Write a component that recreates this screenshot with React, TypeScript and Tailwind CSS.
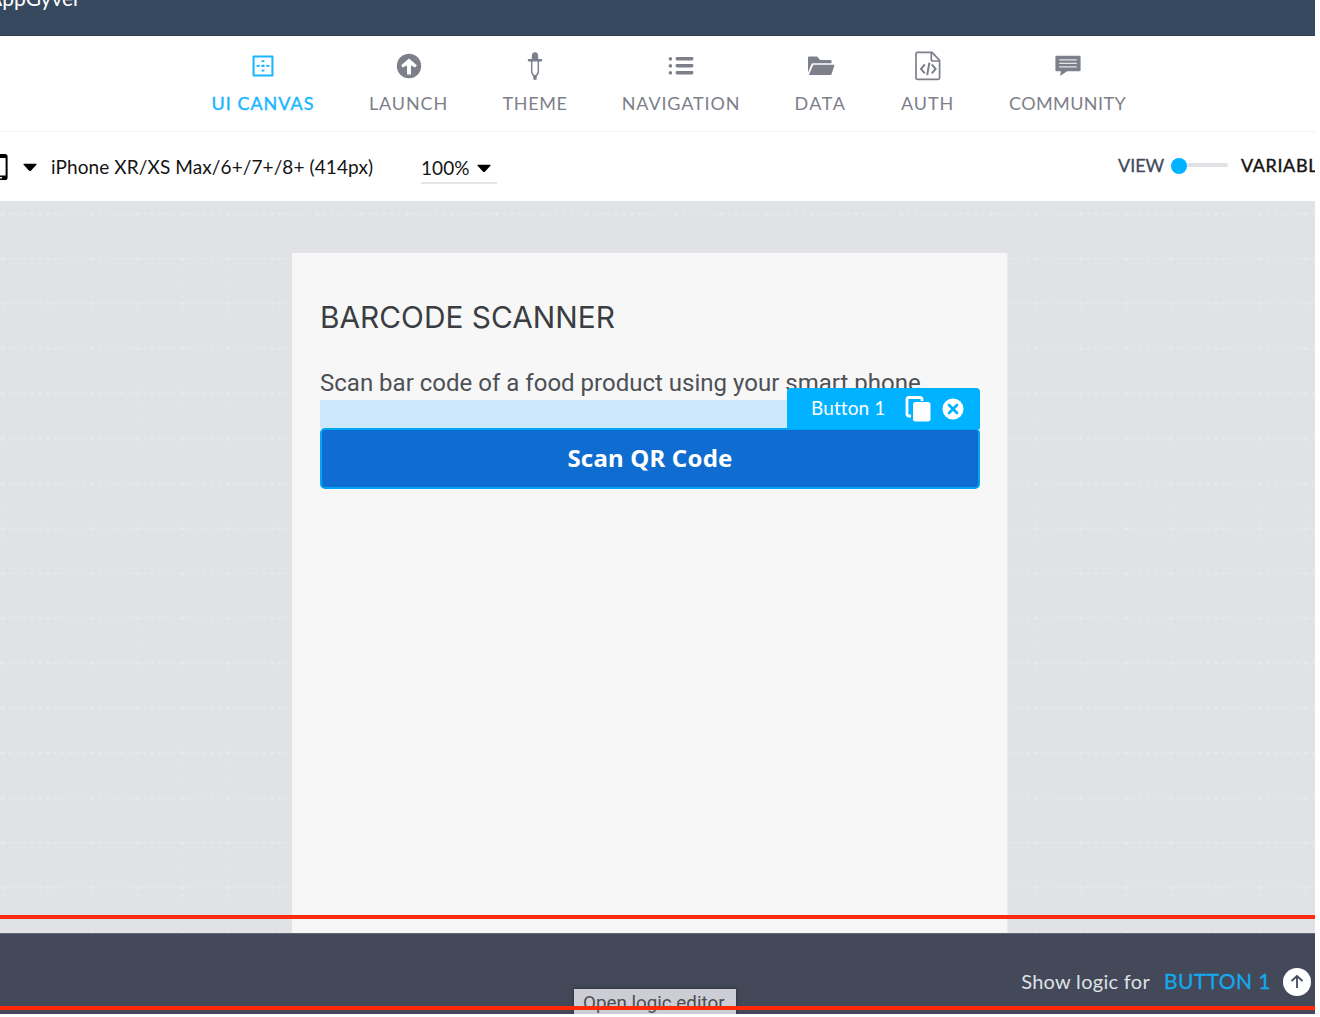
import type { ReactNode } from "react";

type NavItem = { label: string; style: string; icon: ReactNode };

const CanvasIcon = () => (
  <svg width="22" height="22" viewBox="0 0 22 22" fill="currentColor">
    <path fillRule="evenodd" d="M1.5 0.5h19a1 1 0 0 1 1 1v19a1 1 0 0 1-1 1h-19a1 1 0 0 1-1-1v-19a1 1 0 0 1 1-1zM2.600 2.600v16.800h16.800V2.600z" />
    <rect x="9.6" y="5.2" width="2.8" height="1.9" />
    <rect x="9.6" y="14.6" width="2.8" height="1.9" />
    <rect x="4.6" y="9.9" width="3.2" height="1.9" />
    <rect x="9.4" y="9.7" width="3.2" height="2.3" />
    <rect x="14.2" y="9.9" width="3.2" height="1.9" />
  </svg>
);

const LaunchIcon = () => (
  <svg width="26" height="26" viewBox="0 0 26 26">
    <circle cx="13" cy="13" r="12.2" fill="currentColor" />
    <path d="M13 5.600 5.200 12.200 6.600 14.400 11 12.400v9h4v-9l4.400 2 1.400-2.200z" fill="white" />
  </svg>
);

const ThemeIcon = () => (
  <svg width="16" height="30" viewBox="0 0 16 30" fill="none">
    <path d="M4.8 8V5a3.2 3.8 0 0 1 6.4 0v3h3a1 1 0 0 1 1 1v.6a1 1 0 0 1-1 1H1.8a1 1 0 0 1-1-1V9a1 1 0 0 1 1-1z" fill="currentColor" />
    <path d="M4.7 10v11.5L7.2 25.5v2.4h1.6v-2.4l2.5-4V10" stroke="currentColor" strokeWidth="1.5" />
    <path d="M6 24h4l-1.2 4.4H7.2z" fill="currentColor" />
  </svg>
);

const NavigationIcon = () => (
  <svg width="26" height="20" viewBox="0 0 26 20" fill="currentColor">
    <rect x="0.8" y="1.2" width="3.200" height="3.200" rx="1" />
    <rect x="0.8" y="8.2" width="3.200" height="3.200" rx="1" />
    <rect x="0.8" y="15.2" width="3.200" height="3.200" rx="1" />
    <rect x="7.6" y="1" width="17.8" height="3.5" rx="1.4" />
    <rect x="7.6" y="8" width="17.8" height="3.5" rx="1.4" />
    <rect x="7.6" y="15" width="17.8" height="3.5" rx="1.4" />
  </svg>
);

const DataIcon = () => (
  <svg width="28" height="20" viewBox="0 0 28 20" fill="currentColor">
    <path d="M1 16.5V1.6A1 1 0 0 1 2 .6h7.8a1 1 0 0 1 .8.4l2.4 2.9h10.6a.9.9 0 0 1 .9.9v2.4H6a1.8 1.8 0 0 0-1.7 1.2z" />
    <path d="M6.3 8.7h20.1a.9.9 0 0 1 .85 1.2l-2.7 8.4a1.2 1.2 0 0 1-1.1.8H1.8z" />
  </svg>
);

const AuthIcon = () => (
  <svg width="26" height="30" viewBox="0 0 26 30" fill="none" stroke="currentColor" strokeWidth="1.7">
    <path d="M2.4 1.4h14.6l7.6 8v17.4a1.6 1.6 0 0 1-1.6 1.6H2.4A1.4 1.4 0 0 1 1 27V2.8a1.4 1.4 0 0 1 1.4-1.4z" />
    <path d="M16.3 1.6v6.6a1.8 1.8 0 0 0 1.8 1.8h6.3" />
    <path d="M9.8 13.3 6 18l3.8 4.3M16.8 13.3l3.8 4.7-3.8 4.3M14.4 11.6l-2.2 12.6" strokeWidth="2" />
  </svg>
);

const CommunityIcon = () => (
  <svg width="26" height="22" viewBox="0 0 26 22">
    <path d="M1.6.8h22.8a1.2 1.2 0 0 1 1.2 1.2v13a1.2 1.2 0 0 1-1.2 1.2H12.2L5 21l1-4.8H1.6A1.2 1.2 0 0 1 .4 15V2A1.2 1.2 0 0 1 1.6.8z" fill="currentColor" />
    <path d="M4.2 4.9h17.6M4.2 8.4h17.6M4.2 11.9h17.6" stroke="#e4e5e7" strokeWidth="1.4" />
  </svg>
);

const navItems: NavItem[] = [
  { label: "UI CANVAS", style: "w-[102px] text-[#1ab6ff] tracking-[1px] [-webkit-text-stroke:0.4px_#1ab6ff]", icon: <CanvasIcon /> },
  { label: "LAUNCH", style: "w-[78px] tracking-[0.85px]", icon: <LaunchIcon /> },
  { label: "THEME", style: "w-[64px] tracking-[0.6px]", icon: <ThemeIcon /> },
  { label: "NAVIGATION", style: "w-[117px] tracking-[0.85px]", icon: <NavigationIcon /> },
  { label: "DATA", style: "w-[51px] tracking-[1.6px]", icon: <DataIcon /> },
  { label: "AUTH", style: "w-[52px] tracking-[0.9px]", icon: <AuthIcon /> },
  { label: "COMMUNITY", style: "w-[117px] tracking-[0.4px]", icon: <CommunityIcon /> },
];

const Caret = () => (
  <svg width="14" height="9" viewBox="0 0 14 9" className="shrink-0">
    <path d="M.9.8h12.2q.9.2.3 1L7.9 7.7q-.9.8-1.8 0L.6 1.8Q0 1 .9.8z" fill="black" />
  </svg>
);

const Grid = () => (
  <svg className="absolute inset-0 h-full w-full">
    <defs>
      <pattern id="grid" x="2" y="12" width="44.93" height="44.93" patternUnits="userSpaceOnUse">
        <path d="M.8 0v44.93" stroke="#e5e6e9" strokeWidth="1.4" strokeDasharray="3.5 3.99" strokeDashoffset="1.5" />
        <path d="M0 .8h44.93" stroke="#e8e9ec" strokeWidth="1.4" strokeDasharray="3.5 3.99" strokeDashoffset="1.5" />
        <circle cx="1" cy="1" r="1.6" fill="#e9eaed" />
      </pattern>
    </defs>
    <rect width="100%" height="100%" fill="url(#grid)" />
  </svg>
);

export default function App() {
  return (
    <div className="h-[1017px] w-[1320px] overflow-hidden bg-white font-['Lato',sans-serif]">
      <div className="relative flex h-[1014px] w-[1315px] flex-col overflow-hidden">
        <header className="h-[36px] shrink-0 border-b border-[#2c4056] bg-[#36495e]">
          <div className="-mt-[15px] -ml-[12px] text-[21px] leading-[26px] text-white">AppGyver</div>
        </header>

        <nav className="flex h-[96px] shrink-0 gap-[55.5px] border-b border-[#f1f4f5] pl-[212px] text-[18px] text-[#7d808a]">
          {navItems.map((item) => (
            <div key={item.label} className={`flex shrink-0 flex-col items-center whitespace-nowrap ${item.style}`}>
              <div className="mt-[14px] flex h-[32px] items-center">{item.icon}</div>
              <span className="mt-[8.500px] leading-[24px]">{item.label}</span>
            </div>
          ))}
        </nav>

        <section className="flex h-[69px] shrink-0 items-center text-[19px] text-[#141414]">
          <svg width="8" height="28" viewBox="0 0 8 28" className="shrink-0">
            <path d="M0 1h5a2.6 2.6 0 0 1 2.6 2.6v20.8A2.6 2.6 0 0 1 5 27H0v-4.5h5.6V5H0z" fill="black" />
            <rect x="0" y="24" width="2" height="1.5" fill="white" />
          </svg>
          <div className="ml-[15px] mt-[2px] flex"><Caret /></div>
          <span className="ml-[14px] w-[370px] leading-[24px] tracking-[0.1px]">iPhone XR/XS Max/6+/7+/8+ (414px)</span>
          <div className="mt-[3px] flex h-[32px] w-[76px] items-center border-b-2 border-[#e4e5e6]">
            <span className="mt-[2px] tracking-[0.1px]">100%</span>
            <div className="ml-[7px] mt-[2px]"><Caret /></div>
          </div>
          <div className="ml-auto flex w-[197px] -translate-y-px items-center whitespace-nowrap text-[18px]">
            <span className="w-[53px] shrink-0 text-[#424a5b] [-webkit-text-stroke:0.3px_#424a5b]">VIEW</span>
            <span className="size-[16px] shrink-0 rounded-full bg-[#00b2ff]" />
            <span className="-mt-[2px] h-[4px] w-[41px] shrink-0 rounded-r bg-[#e1e2e6]" />
            <span className="ml-[13px] shrink-0 tracking-[0.6px] [-webkit-text-stroke:0.4px_#141414]">VARIABLES</span>
          </div>
        </section>

        <main className="relative flex h-[732px] shrink-0 justify-start overflow-hidden bg-[#e1e2e6] pl-[292px] pt-[52px]">
          <Grid />
          <article className="relative h-[680px] w-[716px] border-r border-[#e9eaec] bg-[#f7f7f7] px-[28px] pt-[44px]">
            <h1 className="whitespace-nowrap font-['Inter',sans-serif] text-[29.8px] leading-[40px] tracking-[0.03px] text-[#3a3d42]">BARCODE SCANNER</h1>
            <p className="mt-[30px] mb-px whitespace-nowrap font-['Roboto',sans-serif] text-[24px] leading-[32px] tracking-[0.01px] text-[#4d5055]">
              Scan bar code of a food product using your smart phone.
            </p>
            <div className="relative h-[28px] w-[660px] bg-[#cde8fb]">
              <div className="absolute -top-[12px] right-0 flex h-[41px] w-[193px] items-center rounded-t-[4px] bg-[#00b2ff] pl-[24px] text-white">
                <span className="w-[94px] text-[19px] tracking-[0.1px]">Button 1</span>
                <svg width="26" height="26" viewBox="0 0 26 26">
                  <path d="M6 20H3.700A1.700 1.700 0 0 1 2 18.300V3.200A1.700 1.700 0 0 1 3.700 1.500h11.600A1.700 1.700 0 0 1 17 3.200V5" fill="none" stroke="white" strokeWidth="2.800" />
                  <rect x="8" y="6" width="17.500" height="19.500" rx="2.500" fill="white" />
                </svg>
                <svg width="22" height="22" viewBox="0 0 22 22" className="ml-[11px]">
                  <circle cx="11" cy="11" r="10.500" fill="white" />
                  <path d="M7 7l8 8M15 7l-8 8" stroke="#00b2ff" strokeWidth="2.700" strokeLinecap="round" />
                </svg>
              </div>
            </div>
            <button className="flex h-[61px] w-[660px] items-center justify-center rounded-[5px] border-2 border-[#00a6f5] bg-[#0f6dd1] pb-px font-['Noto_Sans',sans-serif] text-[24px] font-bold tracking-[0.2px] text-white">
              Scan QR Code
            </button>
          </article>
        </main>

        <footer className="relative flex h-[81px] shrink-0 items-center justify-end border-t border-[#606571] bg-[#444959] pr-[4px] pt-[16px]">
          <span className="-mt-[2px] text-[20px] tracking-[0.3px] text-[#dfe1e5]">Show logic for</span>
          <span className="-mt-[2px] ml-[14px] w-[119px] text-[21px] tracking-[0.4px] text-[#12a9ee] [-webkit-text-stroke:0.3px_#12a9ee]">BUTTON 1</span>
          <svg width="28" height="28" viewBox="0 0 28 28">
            <circle cx="14" cy="14" r="14" fill="white" />
            <path d="M14 20V8.500M8.500 13l5.500-5 5.500 5" fill="none" stroke="#444959" strokeWidth="1.800" />
          </svg>
          <div className="absolute left-[574px] top-[55px] h-[40px] w-[162px] whitespace-nowrap bg-[#cdced5] pl-[9px] pt-[2px] font-['Roboto',sans-serif] text-[18.800px] leading-[24px] text-[#4c4d52] shadow-[0_0_4px_#272b37]">
            Open logic editor
          </div>
        </footer>

        <div className="absolute left-0 top-[915px] h-[4px] w-full bg-[#ff2a10]" />
        <div className="absolute left-0 top-[1006px] h-[4px] w-full bg-[#ff2a08]" />
      </div>
    </div>
  );
}
